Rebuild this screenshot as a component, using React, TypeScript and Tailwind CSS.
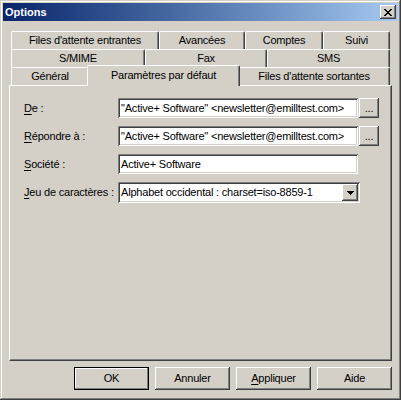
import React from "react";

const raised =
  "shadow-[inset_-1px_-1px_#404040,inset_1px_1px_#ffffff,inset_-2px_-2px_#808080,inset_2px_2px_#d4d0c8]";
const sunken =
  "shadow-[inset_1px_1px_#808080,inset_-1px_-1px_#ffffff,inset_2px_2px_#404040,inset_-2px_-2px_#d4d0c8]";

function Tab({ w, children }: { w: string; children: React.ReactNode }) {
  return (
    <div
      className={`${w} h-[18px] flex items-center justify-center rounded-t-[2px] border-l border-t border-white border-r border-r-[#404040] shadow-[inset_-1px_0_#808080] whitespace-nowrap`}
    >
      {children}
    </div>
  );
}

function U({ children }: { children: React.ReactNode }) {
  return <span className="underline underline-offset-[2px]">{children}</span>;
}

function Btn({ children, def }: { children: React.ReactNode; def?: boolean }) {
  return (
    <div
      className={`w-[75px] h-[23px] flex items-center justify-center ${
        def
          ? "border border-black shadow-[inset_-1px_-1px_#808080,inset_1px_1px_#ffffff]"
          : raised
      }`}
    >
      {children}
    </div>
  );
}

function Dots() {
  return (
    <div className={`w-[20px] h-[20px] flex items-end justify-center pb-[4px] leading-none ${raised}`}>
      ...
    </div>
  );
}

export default function App() {
  return (
    <div className="w-[401px] h-[400px] bg-[#d4d0c8] p-[3px] flex flex-col font-['Liberation_Sans',Arial,sans-serif] text-[11px] text-black tracking-[-0.2px] shadow-[inset_-1px_-1px_#404040,inset_1px_1px_#d4d0c8,inset_-2px_-2px_#808080,inset_2px_2px_#ffffff]">
      {/* Title bar */}
      <div className="h-[18px] flex items-center justify-between pl-[2px] pr-[2px] bg-gradient-to-r from-[#0a246a] to-[#a6caf0]">
        <span className="text-white font-bold tracking-normal">Options</span>
        <div className={`w-[16px] h-[14px] bg-[#d4d0c8] flex items-center justify-center ${raised}`}>
          <svg width="8" height="7" viewBox="0 0 8 7" shapeRendering="crispEdges">
            <path
              fill="#000"
              d="M0 0h2v1H0zM6 0h2v1H6zM1 1h2v1H1zM5 1h2v1H5zM2 2h4v1H2zM3 3h2v1H3zM2 4h4v1H2zM1 5h2v1H1zM5 5h2v1H5zM0 6h2v1H0zM6 6h2v1H6z"
            />
          </svg>
        </div>
      </div>

      {/* Tabs + panel */}
      <div className="mt-[10px] px-[6px] flex flex-col">
        <div className="flex pl-[2px]">
          <Tab w="w-[148px]">Files d'attente entrantes</Tab>
          <Tab w="w-[86px]">Avancées</Tab>
          <Tab w="w-[78px]">Comptes</Tab>
          <Tab w="w-[67px]">Suivi</Tab>
        </div>
        <div className="flex pl-[2px]">
          <Tab w="w-[134px]">S/MIME</Tab>
          <Tab w="w-[122px]">Fax</Tab>
          <Tab w="w-[123px]">SMS</Tab>
        </div>
        <div className="flex pl-[2px] h-[18px]">
          <Tab w="w-[78px]">Général</Tab>
          <div className="relative z-10 -mt-[2px] -mx-[2px] w-[153px] h-[21px] pb-[2px] bg-[#d4d0c8] flex items-center justify-center rounded-t-[2px] border-l border-t border-white border-r border-r-[#404040] shadow-[inset_-1px_0_#808080] whitespace-nowrap">
            Paramètres par défaut
          </div>
          <Tab w="w-[152px]">Files d'attente sortantes</Tab>
        </div>

        <div className="h-[276px] border border-white border-r-[#404040] border-b-[#404040] shadow-[inset_-1px_-1px_#808080] pl-[14px] pt-[12px]">
          <div className="grid grid-cols-[94px_auto] gap-y-[8px] items-center">
            <div>
              <U>D</U>e :
            </div>
            <div className="flex gap-[1px]">
              <div className={`w-[240px] h-[20px] bg-white flex items-center pl-[3px] whitespace-nowrap ${sunken}`}>
                "Active+ Software" &lt;newsletter@emilltest.com&gt;
              </div>
              <Dots />
            </div>

            <div>
              <U>R</U>épondre à :
            </div>
            <div className="flex gap-[1px]">
              <div className={`w-[240px] h-[20px] bg-white flex items-center pl-[3px] whitespace-nowrap ${sunken}`}>
                "Active+ Software" &lt;newsletter@emilltest.com&gt;
              </div>
              <Dots />
            </div>

            <div>
              <U>S</U>ociété :
            </div>
            <div className={`w-[240px] h-[20px] bg-white flex items-center pl-[3px] ${sunken}`}>
              Active+ Software
            </div>

            <div>
              <U>J</U>eu de caractères :
            </div>
            <div className={`w-[242px] h-[21px] bg-white flex items-center justify-between pl-[3px] pr-[2px] ${sunken}`}>
              <span className="whitespace-nowrap">Alphabet occidental : charset=iso-8859-1</span>
              <div className={`w-[16px] h-[17px] bg-[#d4d0c8] flex items-center justify-center ${raised}`}>
                <svg width="7" height="4" viewBox="0 0 7 4" shapeRendering="crispEdges">
                  <path fill="#000" d="M0 0h7v1H0zM1 1h5v1H1zM2 2h3v1H2zM3 3h1v1H3z" />
                </svg>
              </div>
            </div>
          </div>
        </div>

        <div className="mt-[6px] flex justify-end gap-[6px]">
          <Btn def>OK</Btn>
          <Btn>Annuler</Btn>
          <Btn>
            <span>
              <U>A</U>ppliquer
            </span>
          </Btn>
          <Btn>Aide</Btn>
        </div>
      </div>
    </div>
  );
}
